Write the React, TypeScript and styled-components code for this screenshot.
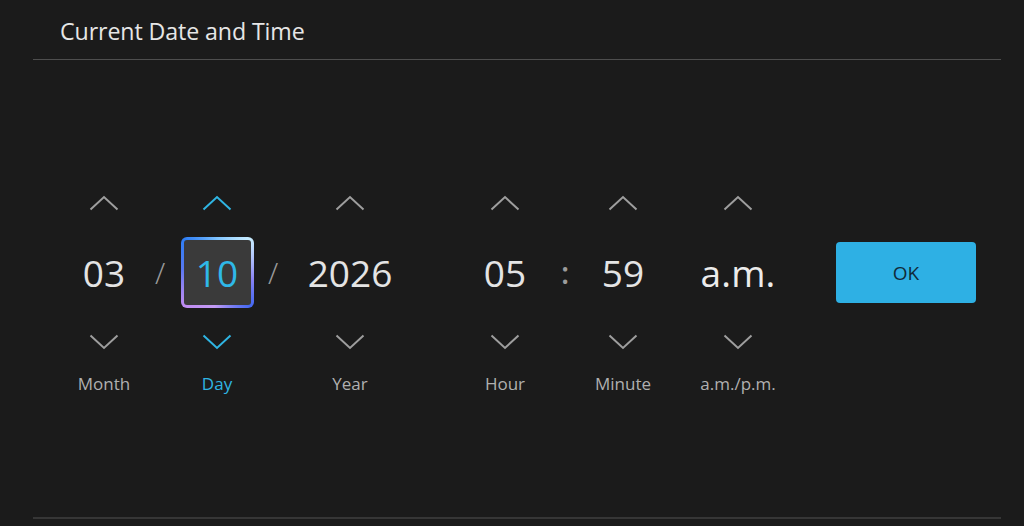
import React from "react";
import styled, { createGlobalStyle } from "styled-components";

const Global = createGlobalStyle`
  html, body { margin: 0; padding: 0; background: #1b1b1b; }
  body { font-family: "Open Sans", "Noto Sans", sans-serif; }
  #root { height: 526px; }
`;

const Screen = styled.div`
  height: 526px;
  box-sizing: border-box;
  padding: 0 23px 7px 33px;
  display: flex;
  flex-direction: column;
  background: #1b1b1b;
`;

const Header = styled.div`
  height: 60px;
  box-sizing: border-box;
  border-bottom: 1px solid #4e4e4e;
  padding-left: 27px;
  display: flex;
  align-items: flex-start;
`;

const Title = styled.h1`
  margin: 0;
  padding-top: 15px;
  font-size: 23.2px;
  line-height: 32px;
  font-weight: 400;
  color: #e6e6e6;
  letter-spacing: -0.1px;
`;

const Body = styled.div`
  flex: 1;
  border-bottom: 2px solid #363636;
  padding: 135px 0 0 31px;
`;

const Row = styled.div`
  display: flex;
  align-items: flex-start;
`;

const Column = styled.div<{ $w: number; $ml?: number }>`
  width: ${(p) => p.$w}px;
  margin-left: ${(p) => p.$ml ?? 0}px;
  display: flex;
  flex-direction: column;
  align-items: center;
`;

const Chevron = styled.svg<{ $active?: boolean }>`
  display: block;
  width: 30px;
  height: 16px;
  stroke: ${(p) => (p.$active ? "#2fb5e3" : "#9e9e9e")};
  fill: none;
  stroke-width: 2;
`;

const UpGap = styled.div`
  height: 26px;
`;
const DownGap = styled.div`
  height: 26px;
`;

const Value = styled.div<{ $active?: boolean }>`
  height: 71px;
  width: 73px;
  box-sizing: border-box;
  display: flex;
  align-items: center;
  justify-content: center;
  font-size: 37px;
  font-weight: 400;
  line-height: 1;
  white-space: nowrap;
  color: ${(p) => (p.$active ? "#2fb8e8" : "#e4e4e4")};
  border-radius: 6px;
  ${(p) =>
    p.$active
      ? `
    border: 3px solid transparent;
    background:
      linear-gradient(#3a3a3a, #3a3a3a) padding-box,
      conic-gradient(from 0deg,
        #7fc4ff 0deg,
        #c8ecff 45deg,
        #8c84f4 100deg,
        #4468f2 135deg,
        #c39cf4 185deg,
        #c08cf2 225deg,
        #5a78f2 275deg,
        #2f7ef4 315deg,
        #7fc4ff 360deg) border-box;
  `
      : ""}
`;

const AmPm = styled.span`
  font-weight: 500;
  color: #ececec;
  letter-spacing: 0.2px;
`;

const Label = styled.div<{ $active?: boolean }>`
  margin-top: 23px;
  font-size: 17px;
  line-height: 22px;
  white-space: nowrap;
  color: ${(p) => (p.$active ? "#2fb5e3" : "#b0b0b0")};
`;

const Sep = styled.div<{ $w: number; $size: number; $weight: number }>`
  width: ${(p) => p.$w}px;
  margin-top: 42px;
  height: 71px;
  display: flex;
  align-items: center;
  justify-content: center;
  color: #9c9c9c;
  font-size: ${(p) => p.$size}px;
  font-weight: ${(p) => p.$weight};
`;

const OkWrap = styled.div`
  margin-left: 21px;
  padding-top: 47px;
`;

const OkButton = styled.button`
  width: 140px;
  height: 61px;
  border: none;
  border-radius: 4px;
  background: #2eb0e4;
  color: #112b3a;
  font-family: "Open Sans", "Noto Sans", sans-serif;
  font-size: 19px;
  cursor: pointer;
`;

const Up = ({ active }: { active?: boolean }) => (
  <Chevron $active={active} viewBox="0 0 30 16">
    <path d="M1.5 14.5 L15 2 L28.5 14.5" />
  </Chevron>
);
const Down = ({ active }: { active?: boolean }) => (
  <Chevron $active={active} viewBox="0 0 30 16">
    <path d="M1.5 1.5 L15 14 L28.5 1.5" />
  </Chevron>
);

type Field = { w: number; ml?: number; value: React.ReactNode; label: string; active?: boolean };

const Picker = ({ w, ml, value, label, active }: Field) => (
  <Column $w={w} $ml={ml}>
    <Up active={active} />
    <UpGap />
    <Value $active={active}>{value}</Value>
    <DownGap />
    <Down active={active} />
    <Label $active={active}>{label}</Label>
  </Column>
);

export default function App() {
  return (
    <>
      <Global />
      <Screen>
        <Header>
          <Title>Current Date and Time</Title>
        </Header>
        <Body>
          <Row>
            <Picker w={80} value="03" label="Month" />
            <Sep $w={32} $size={30} $weight={300}>/</Sep>
            <Picker w={82} value="10" label="Day" active />
            <Sep $w={30} $size={30} $weight={300}>/</Sep>
            <Picker w={124} value="2026" label="Year" />
            <Picker w={80} ml={53} value="05" label="Hour" />
            <Sep $w={40} $size={30} $weight={600}>:</Sep>
            <Picker w={76} value="59" label="Minute" />
            <Picker w={154} value={<AmPm>a.m.</AmPm>} label="a.m./p.m." />
            <OkWrap>
              <OkButton>OK</OkButton>
            </OkWrap>
          </Row>
        </Body>
      </Screen>
    </>
  );
}
